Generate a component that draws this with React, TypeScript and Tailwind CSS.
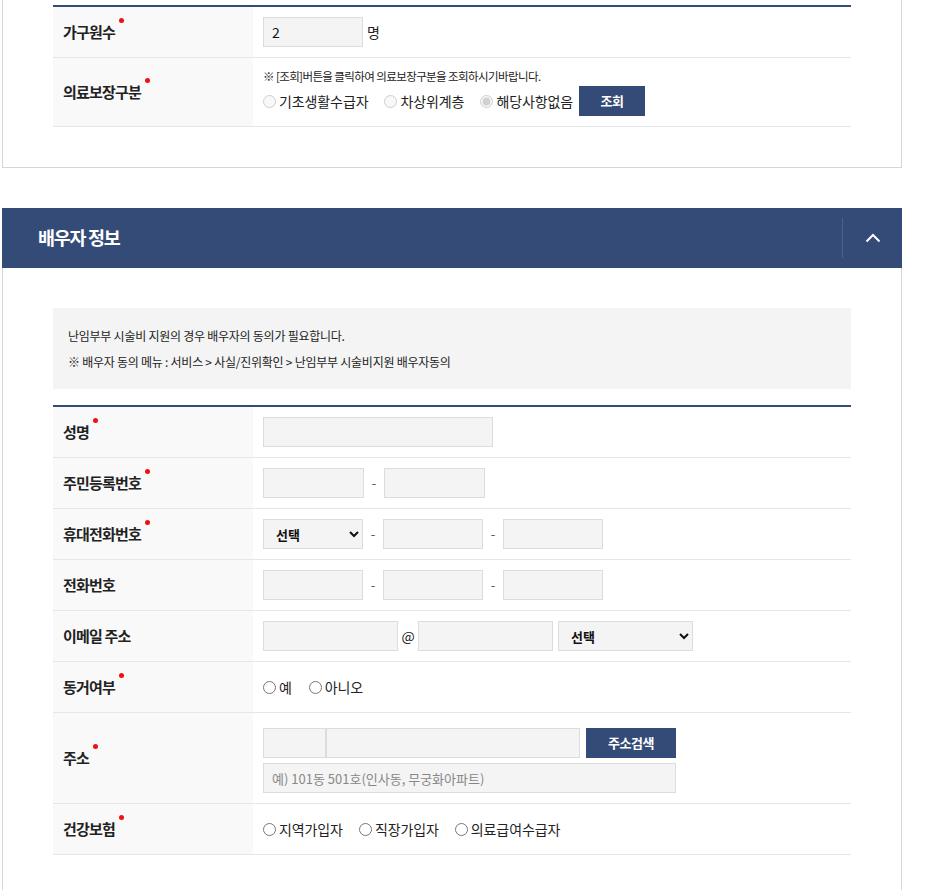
import { ReactNode } from 'react';

const NAVY = 'bg-[#344b77]';

function Label({ text, required }: { text: string; required?: boolean }) {
  return (
    <div className="w-[200px] shrink-0 bg-[#f9f9f9] px-[10px] flex items-center">
      <span className="relative text-[15px] font-bold tracking-[-0.8px] text-[#222] leading-[20px]">
        {text}
        {required && (
          <span className="absolute -top-[4px] -right-[9px] w-[5px] h-[5px] rounded-full bg-[#ee1111]" />
        )}
      </span>
    </div>
  );
}

function Row({ label, required, children, pad = 'py-[10px]' }: { label: string; required?: boolean; children: ReactNode; pad?: string }) {
  return (
    <div className="flex border-b border-[#e6e6e6]">
      <Label text={label} required={required} />
      <div className={`flex-1 px-[10px] min-h-[50px] flex flex-col justify-center ${pad}`}>{children}</div>
    </div>
  );
}

function Input({ w, value, placeholder }: { w: string; value?: string; placeholder?: string }) {
  return (
    <input
      className={`${w} h-[30px] shrink-0 bg-[#f4f4f4] border border-[#dcdcdc] px-[8px] text-[14px] text-[#111] placeholder:text-[#888] placeholder:text-[13px] outline-none`}
      defaultValue={value}
      placeholder={placeholder}
    />
  );
}

function Select({ w }: { w: string }) {
  return (
    <select className={`${w} h-[30px] shrink-0 bg-[#f4f4f4] border border-[#dcdcdc] pl-[8px] pr-[4px] text-[13px] font-semibold text-[#111]`}>
      <option>선택</option>
    </select>
  );
}

function Dash({ children = '-' }: { children?: string }) {
  return <span className="w-[20px] shrink-0 text-center text-[13px] text-[#555]">{children}</span>;
}

function Radio({ name, label, checked, disabled }: { name: string; label: string; checked?: boolean; disabled?: boolean }) {
  return (
    <label className="flex items-center gap-[3px] text-[14px] tracking-[-0.1px] text-[#222]">
      <input type="radio" name={name} defaultChecked={checked} disabled={disabled} className="w-[13px] h-[13px]" />
      <span>{label}</span>
    </label>
  );
}

function Button({ text, w }: { text: string; w: string }) {
  return (
    <button className={`${w} h-[30px] ${NAVY} text-white text-[13px] font-bold tracking-[-0.5px] flex items-center justify-center`}>
      {text}
    </button>
  );
}

export default function App() {
  return (
    <div className="min-h-screen bg-white font-['Noto_Sans_CJK_KR','Noto_Sans',sans-serif] text-[#222]">
      <div className="ml-[2px] w-[900px]">
        {/* Previous section (cut off at top) */}
        <div className="border-x border-b border-[#d6d6d6] px-[50px] pt-[5px] pb-[40px]">
          <div className="border-t-2 border-[#354a75]">
            <Row label="가구원수" required>
              <div className="flex items-center gap-[4px]">
                <Input w="w-[100px]" value="2" />
                <span className="text-[14px]">명</span>
              </div>
            </Row>
            <Row label="의료보장구분" required>
              <p className="text-[11.5px] tracking-[-0.6px] leading-[16px] text-[#222]">※ [조회]버튼을 클릭하여 의료보장구분을 조회하시기바랍니다.</p>
              <div className="mt-[2px] flex items-center">
                <div className="flex items-center gap-[16px] text-[#555]">
                  <Radio name="med" label="기초생활수급자" disabled />
                  <Radio name="med" label="차상위계층" disabled />
                  <Radio name="med" label="해당사항없음" checked disabled />
                </div>
                <div className="ml-[6px]">
                  <Button text="조회" w="w-[66px]" />
                </div>
              </div>
            </Row>
          </div>
        </div>

        {/* 배우자 정보 */}
        <div className="mt-[40px]">
          <div className={`h-[60px] ${NAVY} flex items-center justify-between`}>
            <h2 className="pl-[36px] text-[18.5px] font-bold tracking-[-1.3px] text-white">배우자 정보</h2>
            <div className="w-[60px] h-[40px] border-l border-[#4c5f87] flex items-center justify-center">
              <svg width="16" height="10" viewBox="0 0 16 10" fill="none">
                <path d="M1.5 8.5 L8 2 L14.5 8.5" stroke="white" strokeWidth="2" />
              </svg>
            </div>
          </div>
          <div className="border-x border-[#d6d6d6] px-[50px] pt-[40px] pb-[40px]">
            <div className="bg-[#f4f4f4] px-[15px] pt-[15px] pb-[14px] text-[12px] tracking-[-0.25px] leading-[26px] text-[#222]">
              <p>난임부부 시술비 지원의 경우 배우자의 동의가 필요합니다.</p>
              <p>※ 배우자 동의 메뉴 : 서비스 &gt; 사실/진위확인 &gt; 난임부부 시술비지원 배우자동의</p>
            </div>

            <div className="mt-[16px] border-t-2 border-[#354a75]">
              <Row label="성명" required>
                <Input w="w-[230px]" />
              </Row>
              <Row label="주민등록번호" required>
                <div className="flex items-center">
                  <Input w="w-[101px]" />
                  <Dash />
                  <Input w="w-[101px]" />
                </div>
              </Row>
              <Row label="휴대전화번호" required>
                <div className="flex items-center">
                  <Select w="w-[100px]" />
                  <Dash />
                  <Input w="w-[100px]" />
                  <Dash />
                  <Input w="w-[100px]" />
                </div>
              </Row>
              <Row label="전화번호">
                <div className="flex items-center">
                  <Input w="w-[100px]" />
                  <Dash />
                  <Input w="w-[100px]" />
                  <Dash />
                  <Input w="w-[100px]" />
                </div>
              </Row>
              <Row label="이메일 주소">
                <div className="flex items-center">
                  <Input w="w-[135px]" />
                  <span className="w-[20px] shrink-0 text-center text-[14px] text-[#222]">@</span>
                  <Input w="w-[135px]" />
                  <div className="ml-[5px]">
                    <Select w="w-[135px]" />
                  </div>
                </div>
              </Row>
              <Row label="동거여부" required>
                <div className="flex items-center gap-[17px]">
                  <Radio name="live" label="예" />
                  <Radio name="live" label="아니오" />
                </div>
              </Row>
              <Row label="주소" required pad="pt-[15px] pb-[10px]">
                <div className="flex items-center">
                  <Input w="w-[63px]" />
                  <Input w="w-[254px]" />
                  <div className="ml-[6px]">
                    <Button text="주소검색" w="w-[90px]" />
                  </div>
                </div>
                <div className="mt-[5px]">
                  <Input w="w-[413px]" placeholder="예) 101동 501호(인사동, 무궁화아파트)" />
                </div>
              </Row>
              <Row label="건강보험" required>
                <div className="flex items-center gap-[16px]">
                  <Radio name="ins" label="지역가입자" />
                  <Radio name="ins" label="직장가입자" />
                  <Radio name="ins" label="의료급여수급자" />
                </div>
              </Row>
            </div>
          </div>
        </div>
      </div>
    </div>
  );
}
